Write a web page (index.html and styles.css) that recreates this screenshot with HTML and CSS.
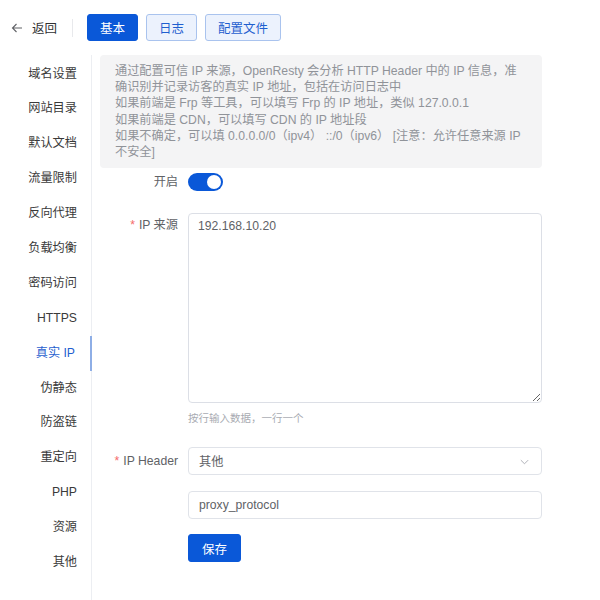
FILE: index.html
```html
<!DOCTYPE html>
<html lang="zh-CN">
<head>
<meta charset="utf-8">
<title>真实 IP</title>
<link rel="stylesheet" href="styles.css">
</head>
<body>
<header class="topbar">
  <a class="back">
    <svg class="back-icon" viewBox="0 0 12 12" width="12" height="12"><path d="M11 6H1.5M5.5 2L1.5 6l4 4" fill="none" stroke="#606266" stroke-width="1.1"/></svg>
    <span>返回</span>
  </a>
  <span class="divider"></span>
  <button class="btn btn-primary">基本</button>
  <button class="btn btn-light">日志</button>
  <button class="btn btn-light">配置文件</button>
</header>
<div class="main">
  <nav class="sidebar">
    <div class="nav-item">域名设置</div>
    <div class="nav-item">网站目录</div>
    <div class="nav-item">默认文档</div>
    <div class="nav-item">流量限制</div>
    <div class="nav-item">反向代理</div>
    <div class="nav-item">负载均衡</div>
    <div class="nav-item">密码访问</div>
    <div class="nav-item">HTTPS</div>
    <div class="nav-item active">真实 IP</div>
    <div class="nav-item">伪静态</div>
    <div class="nav-item">防盗链</div>
    <div class="nav-item">重定向</div>
    <div class="nav-item">PHP</div>
    <div class="nav-item">资源</div>
    <div class="nav-item">其他</div>
  </nav>
  <section class="content">
    <div class="alert">
      <p>通过配置可信 IP 来源，OpenResty 会分析 HTTP Header 中的 IP 信息，准确识别并记录访客的真实 IP 地址，包括在访问日志中</p>
      <p>如果前端是 Frp 等工具，可以填写 Frp 的 IP 地址，类似 127.0.0.1</p>
      <p>如果前端是 CDN，可以填写 CDN 的 IP 地址段</p>
      <p>如果不确定，可以填 0.0.0.0/0（ipv4） ::/0（ipv6） [注意：允许任意来源 IP 不安全]</p>
    </div>
    <div class="form">
      <div class="row row-switch">
        <label class="label">开启</label>
        <div class="control">
          <span class="switch"><span class="knob"></span></span>
        </div>
      </div>
      <div class="row row-textarea">
        <label class="label"><span class="req">*</span>IP 来源</label>
        <div class="control">
          <textarea class="textarea">192.168.10.20</textarea>
          <div class="hint">按行输入数据，一行一个</div>
        </div>
      </div>
      <div class="row row-select">
        <label class="label"><span class="req">*</span>IP Header</label>
        <div class="control">
          <div class="select">
            <span>其他</span>
            <svg class="chevron" viewBox="0 0 12 12" width="11" height="11"><path d="M2 4.5l4 4 4-4" fill="none" stroke="#a8abb2" stroke-width="1"/></svg>
          </div>
        </div>
      </div>
      <div class="row row-input">
        <span class="label"></span>
        <div class="control">
          <div class="input">proxy_protocol</div>
        </div>
      </div>
      <div class="row row-save">
        <span class="label"></span>
        <div class="control">
          <button class="btn btn-primary btn-save">保存</button>
        </div>
      </div>
    </div>
  </section>
</div>
</body>
</html>
```
FILE: styles.css
```css
* { box-sizing: border-box; }
html, body { margin: 0; padding: 0; background: #fff; }
body {
  width: 600px;
  height: 600px;
  overflow: hidden;
  font-family: "Liberation Sans", Arial, "Noto Sans CJK SC", sans-serif;
  font-size: 12.2px;
  color: #606266;
}
p { margin: 0; }

.topbar {
  height: 55px;
  display: flex;
  align-items: flex-start;
  padding: 14px 0 0 11px;
}
.back {
  display: flex;
  align-items: center;
  height: 27px;
  color: #303133;
  font-size: 12.5px;
}
.back-icon { margin-right: 9px; }
.divider {
  width: 1px;
  height: 18px;
  margin: 5px 14px 0 15px;
  background: #e8e9ec;
}
.btn {
  height: 27px;
  padding: 0 12px;
  border-radius: 3px;
  font-family: inherit;
  font-size: 12.5px;
  border: 1px solid transparent;
  margin-right: 8px;
  cursor: pointer;
}
.btn-primary { background: #0a58d8; color: #fff; border-color: #0a58d8; width: 51px; }
.btn-light { background: #ecf2fd; color: #1f5fcf; border-color: #a9c3ee; }
.btn-light:nth-of-type(2) { width: 51px; }
.btn-light:nth-of-type(3) { width: 76px; }

.main { display: flex; }
.sidebar {
  width: 92px;
  flex-shrink: 0;
  border-right: 1px solid #eceef2;
  padding-top: 1.5px;
  min-height: 545px;
}
.nav-item {
  height: 34.9px;
  line-height: 34.9px;
  text-align: right;
  padding-right: 15px;
  color: #3a3a3a;
  font-size: 12.2px;
  position: relative;
  margin-right: -1px;
}
.nav-item.active {
  color: #1f5fcf;
  border-right: 2px solid #8eaee6;
}

.content { width: 450px; padding-left: 8px; }
.alert {
  width: 442px;
  background: #f4f4f5;
  color: #909399;
  border-radius: 4px;
  padding: 8px 14px 8px 15px;
  font-size: 12.2px;
  line-height: 16.2px;
}

.form { display: flex; flex-direction: column; }
.row { display: flex; }
.label {
  width: 88px;
  flex-shrink: 0;
  padding-right: 10px;
  text-align: right;
  color: #606266;
  font-size: 12.2px;
  line-height: 24px;
}
.req { color: #f56c6c; margin-right: 4px; }
.control { width: 354px; }

.row-switch { margin-top: 2px; height: 24px; }
.row-switch .label { line-height: 24px; }
.row-switch .control { display: flex; align-items: center; height: 24px; }
.switch {
  display: block;
  width: 35px;
  height: 18px;
  border-radius: 9px;
  background: #0a58d8;
  position: relative;
}
.knob {
  position: absolute;
  right: 2px;
  top: 2px;
  width: 14px;
  height: 14px;
  border-radius: 50%;
  background: #fff;
}

.row-textarea { margin-top: 19px; }
.row-textarea .label { line-height: 24px; }
.textarea {
  display: block;
  width: 354px;
  height: 190px;
  margin: 0;
  border: 1px solid #dcdfe6;
  border-radius: 4px;
  padding: 5px 9px;
  font-family: inherit;
  font-size: 12.2px;
  line-height: 14px;
  color: #606266;
  resize: vertical;
  outline: none;
}
.hint {
  font-size: 10.5px;
  line-height: 16px;
  margin-top: 7px;
  color: #a8abb2;
}

.row-select { margin-top: 21px; }
.row-select .label { line-height: 28px; }
.select, .input {
  height: 28px;
  border: 1px solid #e0e3e9;
  border-radius: 4px;
  padding: 0 10px;
  display: flex;
  align-items: center;
  justify-content: space-between;
  color: #606266;
  font-size: 12.2px;
}
.chevron { margin-right: 1px; }

.row-input { margin-top: 16px; }
.row-input .label { line-height: 28px; }
.row-save { margin-top: 15px; }
.btn-save { width: 53px; height: 28px; margin: 0; padding: 0; }
```
